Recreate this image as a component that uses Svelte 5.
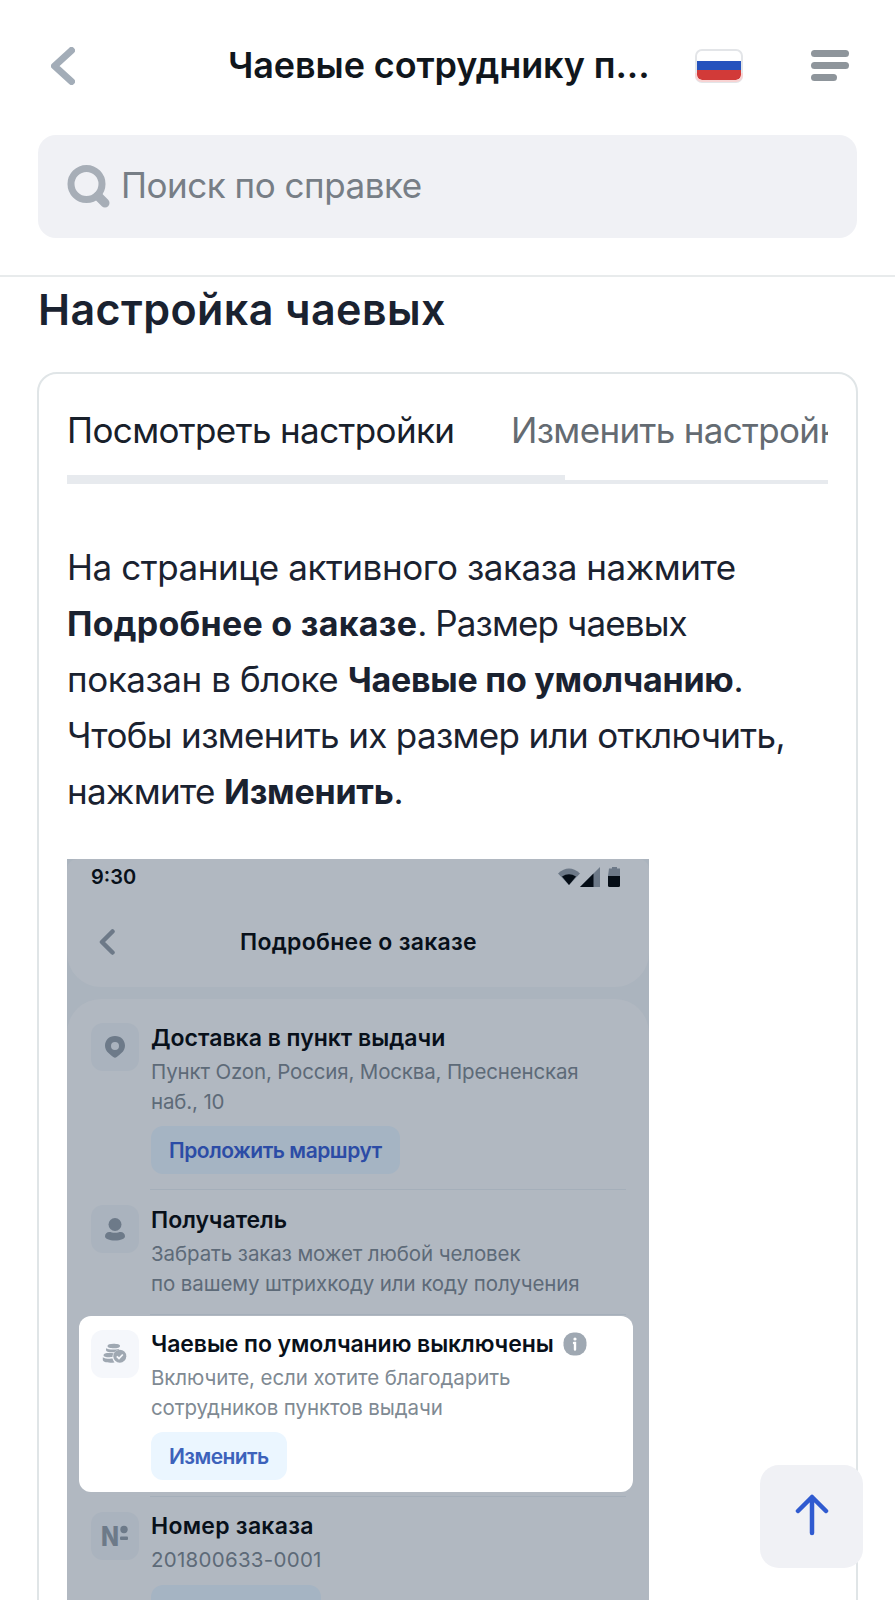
<script lang="ts">
  type Row = {
    icon: "pin" | "user" | "coins" | "number";
    title: string;
    lines: string[];
    action?: string;
    active?: boolean;
    info?: boolean;
  };

  const rows: Row[] = [
    {
      icon: "pin",
      title: "Доставка в пункт выдачи",
      lines: ["Пункт Ozon, Россия, Москва, Пресненская", "наб., 10"],
      action: "Проложить маршрут",
    },
    {
      icon: "user",
      title: "Получатель",
      lines: ["Забрать заказ может любой человек", "по вашему штрихкоду или коду получения"],
    },
    {
      icon: "coins",
      title: "Чаевые по умолчанию выключены",
      lines: ["Включите, если хотите благодарить", "сотрудников пунктов выдачи"],
      action: "Изменить",
      active: true,
      info: true,
    },
    { icon: "number", title: "Номер заказа", lines: ["201800633-0001"], action: "" },
  ];

  let tab = $state(0);
  const tabs = ["Посмотреть настройки", "Изменить настройки"];
</script>

<div class="page">
  <header>
    <div class="bar">
      <button class="back" aria-label="Назад">
        <svg width="24" height="38" viewBox="0 0 24 38"><path d="M20.5 3.5 3.5 19l17 15.5" /></svg>
      </button>
      <div class="title">Чаевые сотруднику п...</div>
      <svg class="flag" width="48" height="34" viewBox="0 0 48 34">
        <rect x="1" y="1" width="46" height="32" rx="6" fill="#fff" stroke="#e3e5e8" stroke-width="2" />
        <path d="M2 12h44v9.5H2z" fill="#2552bd" />
        <path d="M2 21h44v5a5 5 0 0 1-5 5H7a5 5 0 0 1-5-5z" fill="#d23a38" />
        <path d="M1 24v2a6 6 0 0 0 6 6h34a6 6 0 0 0 6-6v-2" fill="none" stroke="#f8d3d3" stroke-width="2" />
      </svg>
      <button class="menu" aria-label="Меню"><i></i><i></i><i></i></button>
    </div>
    <div class="search">
      <svg width="44" height="44" viewBox="0 0 44 44">
        <circle cx="19.5" cy="19" r="15.5" />
        <path d="m31 31 7 7" stroke-width="9" />
      </svg>
      <span>Поиск по справке</span>
    </div>
  </header>

  <main>
    <h1>Настройка чаевых</h1>
    <section class="card">
      <nav>
        {#each tabs as label, i}
          <button class:current={tab === i} onclick={() => (tab = i)}>{label}</button>
        {/each}
      </nav>

      <p>
        <span>На странице активного заказа нажмите</span>
        <span class="tight"><b class="loose">Подробнее о заказе</b>. Размер чаевых</span>
        <span>показан в блоке <b>Чаевые по умолчанию</b>.</span>
        <span class="snug">Чтобы изменить их размер или отключить,</span>
        <span class="snug">нажмите <b>Изменить</b>.</span>
      </p>

      <div class="phone">
        <div class="phone-head">
          <div class="status">
            <span>9:30</span>
            <svg width="64" height="22" viewBox="0 0 64 22">
              <path d="M0 7.5Q11-2.5 22 7.5L11 19z" fill="#6d7988" />
              <path d="M4 10.5Q11 6 18 10.5L11 19z" fill="#050d16" />
              <path d="M42 1v20H22z" fill="#6d7988" />
              <path d="M35.5 7.5V21H22z" fill="#050d16" />
              <path d="M51 2.5h3V1h5v1.5h3V10H50z" fill="#6d7988" />
              <path d="M50 10h12v9.5q0 1.5-1.5 1.5h-9q-1.500 0-1.500-1.500z" fill="#050d16" />
            </svg>
          </div>
          <div class="phone-bar">
            <svg width="16" height="26" viewBox="0 0 16 26"><path d="M13.5 2.5 3 13l10.5 10.5" /></svg>
            <div class="phone-title">Подробнее о заказе</div>
          </div>
        </div>

        <div class="list">
          {#each rows as row}
            <div class="row {row.icon}" class:active={row.active}>
              <div class="icon">
                {#if row.icon === "pin"}
                  <svg width="24" height="24" viewBox="0 0 24 24">
                    <path fill-rule="evenodd" d="M12 1c6 0 10 4.200 10 9.800 0 6-6 9.200-8.300 11.200a2.600 2.600 0 0 1-3.400 0C8 20 2 16.800 2 10.800 2 5.200 6 1 12 1zm0 6a4 4 0 1 0 0 8 4 4 0 0 0 0-8z" />
                  </svg>
                {:else if row.icon === "user"}
                  <svg width="24" height="24" viewBox="0 0 24 24">
                    <circle cx="12" cy="7.500" r="6.500" />
                    <path d="M2 19.200C2 17 4 15 6.300 15c1.600 0 3.200.8 5.700.8s4.100-.8 5.700-.8C20 15 22 17 22 19.200c0 2.600-4.200 4.300-10 4.300S2 21.800 2 19.200z" />
                  </svg>
                {:else if row.icon === "coins"}
                  <svg width="26" height="22" viewBox="0 0 26 22">
                    <path d="M5.500 3C5.500 1.500 8 .8 11.500.8s6.500.7 6.500 2.100c0 1.500-2.700 2.300-6.300 2.300S5.500 4.600 5.500 3z" />
                    <path d="M4 5.200c2 1.300 7 1.900 13 .9v.6c-2 .3-3.500 1.200-4.600 2.500C8 9.600 4 9 4 7z" />
                    <path d="M1.500 12.200c0-1.900 3.500-2.400 10.100-1.900-.8 1.100-1.200 2.300-1.200 3.800-5.400.4-8.900-.2-8.900-1.900z" />
                    <path d="M.8 14.200c2 1.300 5.300 1.700 9.700 1.400.3 1.500 1 2.800 2 3.900-6.500.6-11.700 0-11.700-2.700z" />
                    <circle cx="17.800" cy="13.200" r="6.500" />
                    <path d="m14.800 13.300 2.200 2.200 3.800-4" fill="none" stroke="#f5f7fb" stroke-width="1.800" />
                  </svg>
                {:else}
                  <svg width="28" height="24" viewBox="0 0 28 24">
                    <text x="0" y="21.5" textLength="18" lengthAdjust="spacingAndGlyphs">N</text>
                    <circle cx="23" cy="5.5" r="3.7" />
                    <rect x="19" y="12.5" width="8" height="3.5" rx="1" />
                  </svg>
                {/if}
              </div>
              <div class="info">
                <div class="row-title">
                  {row.title}
                  {#if row.info}
                    <svg width="24" height="24" viewBox="0 0 24 24">
                      <rect x=".5" y=".5" width="23" height="23" rx="10" fill="#9fa8b2" />
                      <circle cx="12" cy="7" r="1.6" fill="#fff" />
                      <path d="M11 11h1v6.5" fill="none" stroke="#fff" stroke-width="2.4" stroke-linecap="round" />
                    </svg>
                  {/if}
                </div>
                <div class="desc">
                  {#each row.lines as line}<div>{line}</div>{/each}
                </div>
                {#if row.action !== undefined}
                  <button class="action">{row.action}</button>
                {/if}
              </div>
            </div>
          {/each}
        </div>
      </div>
    </section>
  </main>

  <button class="to-top" aria-label="Наверх">
    <svg width="36" height="44" viewBox="0 0 36 44"><path d="M18 41V5M4 19 18 5l14 14" /></svg>
  </button>
</div>

<style>
  :global(body) {
    background: #fff;
  }

  .page {
    position: relative;
    height: 1600px;
    overflow: hidden;
    background: #fff;
    color: #1a2230;
    font-family: Inter, "Noto Sans", sans-serif;
  }

  button {
    padding: 0;
    border: 0;
    background: none;
    font: inherit;
    letter-spacing: inherit;
    color: inherit;
    cursor: pointer;
  }

  svg {
    display: block;
    flex: none;
  }

  header {
    box-sizing: border-box;
    height: 277px;
    border-bottom: 2px solid #e8ebec;
    padding: 0 38px;
  }

  .bar {
    display: flex;
    align-items: center;
    height: 135px;
    box-sizing: border-box;
    padding: 0 8px 4px 13px;
  }

  .back path {
    fill: none;
    stroke: #a3adb8;
    stroke-width: 7;
    stroke-linecap: round;
    stroke-linejoin: round;
  }

  .title {
    width: 420px;
    margin-left: 153px;
    padding-bottom: 2px;
    white-space: nowrap;
    font-size: 36px;
    font-weight: 600;
    letter-spacing: -0.1px;
    color: #10161c;
  }

  .flag {
    margin-left: 47px;
  }

  .menu {
    display: flex;
    flex-direction: column;
    gap: 5px;
    margin-left: auto;
  }

  .menu i {
    width: 38px;
    height: 7px;
    border-radius: 4px;
    background: #8e959b;
  }

  .menu i:last-child {
    width: 26px;
  }

  .search {
    display: flex;
    align-items: center;
    height: 103px;
    border-radius: 18px;
    padding-left: 29px;
    background: #f0f1f5;
    font-size: 35px;
    letter-spacing: -0.48px;
    color: #777e86;
  }

  .search svg {
    fill: none;
    stroke: #a7aeb7;
    stroke-width: 7;
    stroke-linecap: round;
  }

  .search span {
    margin-left: 10px;
    padding-bottom: 4px;
    white-space: nowrap;
  }

  main {
    padding: 0 37px;
  }

  h1 {
    margin: 4px 0 0 1px;
    font-size: 43px;
    line-height: 56px;
    font-weight: 600;
    letter-spacing: 0.42px;
    white-space: nowrap;
  }

  .card {
    margin-top: 35px;
    height: 1300px;
    border: 2px solid #e0e5e7;
    border-radius: 20px;
    padding: 0 28px;
  }

  nav {
    display: flex;
    height: 110px;
    overflow: hidden;
    box-shadow: inset 0 -4px #e7eaee;
  }

  nav button {
    flex: none;
    height: 110px;
    box-sizing: border-box;
    padding-top: 1px;
    font-size: 35px;
    letter-spacing: -0.66px;
    color: #646b72;
    white-space: nowrap;
    text-align: left;
  }

  nav button.current {
    width: 498px;
    margin-right: -54px;
    letter-spacing: -0.62px;
    color: #18202a;
    box-shadow: inset 0 -9px #e7eaee;
  }

  p {
    margin: 55px 0 0;
    font-size: 35px;
    line-height: 56px;
    letter-spacing: -0.43px;
    white-space: nowrap;
  }

  p span {
    display: block;
    height: 56px;
  }

  .snug {
    letter-spacing: -0.66px;
  }

  .tight {
    letter-spacing: -0.88px;
  }

  b {
    font-size: 34px;
    font-weight: 700;
    letter-spacing: -0.25px;
  }

  .loose {
    letter-spacing: 0.26px;
  }

  .phone {
    width: 582px;
    margin-top: 40px;
    background: #abb4be;
    color: #08101a;
  }

  .phone-head,
  .list {
    background: #b1b8c1;
  }

  .phone-head {
    height: 128px;
    border-radius: 10px 10px 34px 34px;
  }

  .status {
    display: flex;
    justify-content: space-between;
    align-items: center;
    height: 36px;
    padding: 0 27px 0 24px;
    font-size: 20px;
    font-weight: 600;
  }

  .phone-bar {
    display: flex;
    align-items: center;
    height: 94px;
    padding-left: 32px;
  }

  .phone-bar path {
    fill: none;
    stroke: #6d7988;
    stroke-width: 4.5;
    stroke-linecap: round;
    stroke-linejoin: round;
  }

  .phone-title {
    margin-left: 125px;
    font-size: 23px;
    font-weight: 600;
    letter-spacing: 0.28px;
    white-space: nowrap;
  }

  .list {
    margin-top: 12px;
    border-radius: 34px 34px 0 0;
    padding: 8px 23px 0 24px;
  }

  .row {
    position: relative;
    z-index: 0;
    display: flex;
    gap: 11px;
  }

  .icon {
    display: flex;
    align-items: center;
    justify-content: center;
    width: 48px;
    height: 48px;
    margin-top: 16px;
    border-radius: 12px;
    background: #aab3be;
    fill: #6d7a89;
  }

  .icon text {
    font-size: 27px;
    font-weight: 800;
  }

  .info {
    flex: 1;
    border-top: 1px solid #a5afba;
    padding: 15px 0 15px 1px;
  }

  .row:first-child .info {
    border-color: transparent;
  }

  .row-title {
    display: flex;
    align-items: center;
    gap: 9px;
    height: 30px;
    font-size: 23px;
    font-weight: 600;
    white-space: nowrap;
  }

  .desc {
    margin-top: 4px;
    font-size: 20.5px;
    line-height: 29.5px;
    letter-spacing: -0.1px;
    color: #5d6a78;
    white-space: nowrap;
  }

  .desc:last-child {
    padding-bottom: 1px;
  }

  .pin .desc {
    letter-spacing: -0.16px;
  }

  .coins .info,
  .number .info {
    padding-top: 14px;
    padding-bottom: 16px;
  }

  .number .row-title,
  .number .desc {
    letter-spacing: 0.27px;
  }

  .action {
    display: block;
    min-width: 170px;
    height: 48px;
    margin-top: 10px;
    border-radius: 12px;
    padding: 0 18px;
    background: #a5b4c3;
    font-size: 21px;
    font-weight: 600;
    letter-spacing: -0.47px;
    color: #2c4ca6;
    white-space: nowrap;
  }

  .active::before {
    content: "";
    position: absolute;
    z-index: -1;
    inset: 2px -7px 4px -12px;
    border-radius: 12px;
    background: #fff;
  }

  .active .icon {
    background: #f5f7fb;
    fill: #9fa8b2;
  }

  .active .row-title {
    letter-spacing: -0.07px;
  }

  .active .desc {
    color: #7f8a93;
  }

  .active .action {
    min-width: 0;
    background: #ebf6ff;
    letter-spacing: -0.6px;
    color: #3c62bb;
  }

  .to-top {
    position: absolute;
    left: 760px;
    top: 1465px;
    display: flex;
    align-items: center;
    justify-content: center;
    width: 103px;
    height: 103px;
    border-radius: 19px;
    padding-bottom: 6px;
    background: #f0f1f5;
  }

  .to-top path {
    fill: none;
    stroke: #305bd0;
    stroke-width: 4.5;
    stroke-linecap: round;
    stroke-linejoin: round;
  }
</style>
